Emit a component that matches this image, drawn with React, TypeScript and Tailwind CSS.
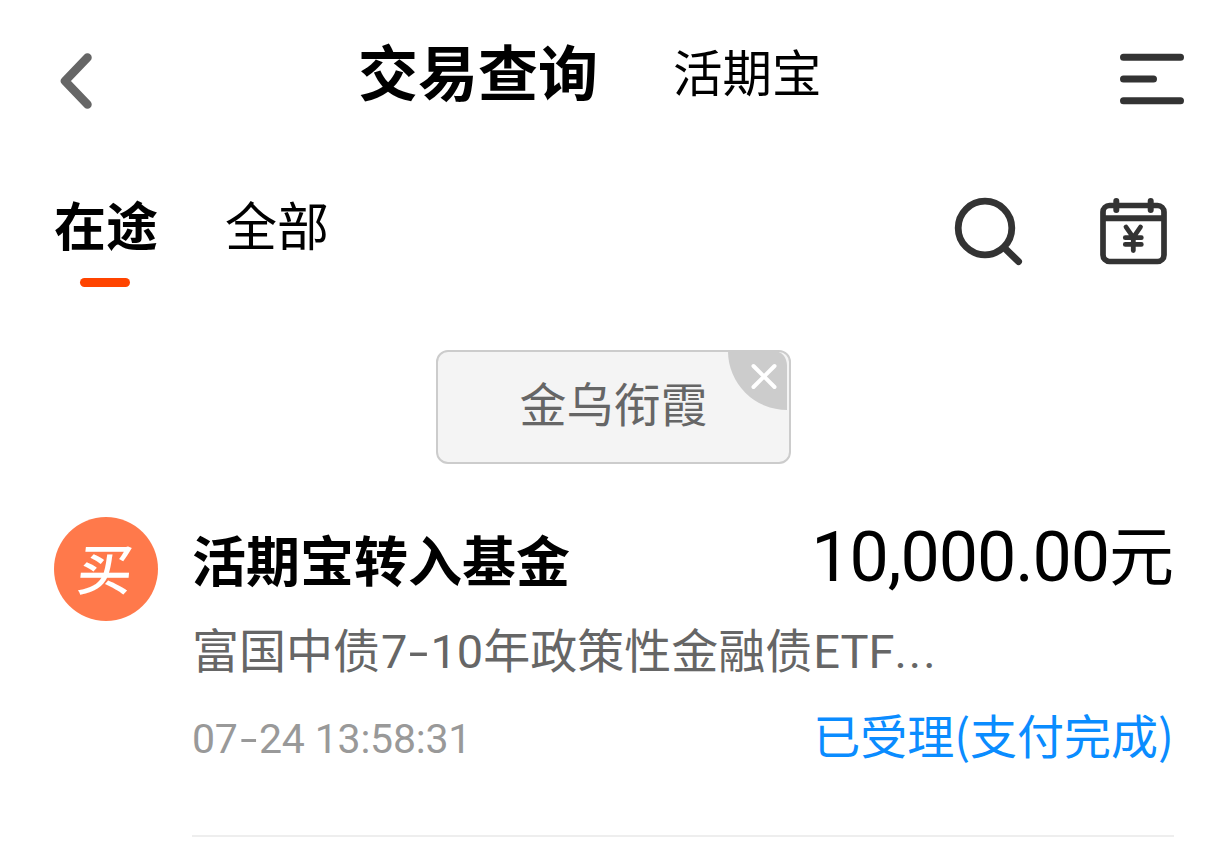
const records = [
  {
    type: "买",
    title: "活期宝转入基金",
    amount: "10,000.00",
    date: ["07", "24"],
    time: "13:58:31",
    status: "已受理(支付完成)",
  },
];

function BackIcon() {
  return (
    <svg width="40" height="64" viewBox="0 0 40 64" fill="none">
      <path d="M33.500 9.500 11 33 33.500 56.500" stroke="#666" strokeWidth="8.500" strokeLinecap="round" strokeLinejoin="round" />
    </svg>
  );
}

function MenuIcon() {
  return (
    <svg width="66" height="52" viewBox="0 0 66 52" stroke="#333" strokeWidth="7" strokeLinecap="round">
      <path d="M3.500 4.300h57M3.500 26h30M3.500 47.700h57" />
    </svg>
  );
}

function SearchIcon() {
  return (
    <svg width="70" height="70" viewBox="0 0 70 70" fill="none" stroke="#333">
      <circle cx="32" cy="31" r="26.800" strokeWidth="6.800" />
      <path d="m51 50.500 14.500 14" strokeWidth="7" strokeLinecap="round" />
    </svg>
  );
}

function CalendarIcon() {
  return (
    <svg width="68" height="68" viewBox="0 0 68 68" fill="none" stroke="#333" strokeLinecap="round">
      <rect x="4" y="8.500" width="61" height="56" rx="6.500" strokeWidth="5.700" />
      <path d="M4 21.300h61" strokeWidth="6" strokeLinecap="butt" />
      <path d="M17.300 4v9M51.700 4v9" strokeWidth="6" />
      <path d="m27 30 7.300 10.500 7.200-10.500M34.300 40.500v13M26.300 40.700h16M26.300 47.400h16" strokeWidth="4.800" strokeLinejoin="round" />
    </svg>
  );
}

function CloseCorner() {
  return (
    <svg className="absolute -top-px right-0.5" width="59" height="60" viewBox="0 0 59 60" fill="none">
      <path d="M0 0h46q12 1 13 14v45A59 59 0 0 1 0 0Z" fill="#ccc" />
      <path d="m25.500 15 21 21M46.500 15l-21 21" stroke="#fff" strokeWidth="4" strokeLinecap="round" />
    </svg>
  );
}

function Dash() {
  return <span className="mx-[5px] inline-block scale-x-150 tracking-normal">-</span>;
}

export default function App() {
  return (
    <div className="h-[842px] w-[1228px] overflow-hidden bg-white font-['Noto_Sans_CJK_SC',sans-serif] whitespace-nowrap text-black">
      <header className="flex h-[154px] items-start pr-[42px] pl-[54px]">
        <button className="mt-[48px]">
          <BackIcon />
        </button>
        <h1 className="mt-[34px] ml-[264px] text-[60px] leading-[72px] font-bold">交易查询</h1>
        <span className="mt-[39px] ml-[75px] text-[49.5px] leading-[64px]">活期宝</span>
        <button className="mt-[53px] ml-auto">
          <MenuIcon />
        </button>
      </header>

      <nav className="flex h-[196px] items-start pr-[61px] pl-[54px]">
        <div className="mt-[38px] flex flex-col items-center">
          <span className="text-[52px] leading-[64px] font-bold">在途</span>
          <span className="mt-[22px] mr-0.5 h-[9px] w-[50px] rounded-full bg-[#ff4400]" />
        </div>
        <span className="mt-[38px] ml-[67px] text-[52px] leading-[64px]">全部</span>
        <button className="mt-[43px] ml-auto">
          <SearchIcon />
        </button>
        <button className="mt-[43px] ml-[76px]">
          <CalendarIcon />
        </button>
      </nav>

      <div className="flex justify-center pr-px">
        <div className="relative h-[114px] w-[355px] rounded-xl border-2 border-[#ccc] bg-[#f4f4f4] text-center text-[47px] leading-[100px] text-[#666]">
          金乌衔霞
          <CloseCorner />
        </div>
      </div>

      {records.map((record) => (
        <div className="mt-[53px] flex items-start gap-[34px] pr-[54px] pl-[54px]" key={record.time}>
          <div className="flex size-[104px] items-center justify-center rounded-full bg-[#ff794b]">
            <span className="-mt-1.5 -skew-x-6 text-[55px] leading-none font-medium text-white">{record.type}</span>
          </div>
          <div className="h-[320px] flex-1 border-b-2 border-[#eee]">
            <div className="flex h-[80px] items-start justify-between">
              <span className="mt-[10px] text-[54px] leading-[64px] font-bold">{record.title}</span>
              <span className="flex items-start">
                <span className="font-[Roboto] text-[70px] leading-[80px] tracking-[-1.1px]">{record.amount}</span>
                <span className="text-[65px] leading-[70px]">元</span>
              </span>
            </div>
            <p className="mt-[19px] h-[64px] text-[47px] leading-[64px] text-[#666]">
              富国中债
              <span className="ml-px font-[Roboto]">
                7<Dash />
                10
              </span>
              年政策性金融债
              <span className="ml-px font-[Roboto]">ETF</span>
              <span className="font-[Roboto] tracking-[2px]">...</span>
            </p>
            <div className="mt-[22px] flex items-start justify-between">
              <span className="mt-[5px] font-[Roboto] text-[41px] leading-[64px] tracking-[-0.2px] text-[#999]">
                {record.date[0]}
                <Dash />
                {record.date[1]} {record.time}
              </span>
              <span className="text-[47px] leading-[64px] text-[#0a8cff]">{record.status}</span>
            </div>
          </div>
        </div>
      ))}
    </div>
  );
}
